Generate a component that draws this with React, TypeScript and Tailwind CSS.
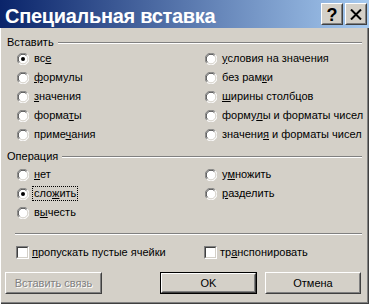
import React from "react";

const font = { fontFamily: '"Liberation Sans", Arial, sans-serif' };

function Radio({ checked }: { checked?: boolean }) {
  return (
    <div className="relative w-[12px] h-[12px] shrink-0">
      <svg width="12" height="12" viewBox="0 0 12 12" className="absolute inset-0">
        <circle cx="6" cy="6" r="5.5" fill="#ffffff" />
        <path d="M1.8 10.2 A5.5 5.5 0 0 1 10.2 1.8" fill="none" stroke="#808080" strokeWidth="1" />
        <path d="M10.2 1.8 A5.5 5.5 0 0 1 1.8 10.2" fill="none" stroke="#ffffff" strokeWidth="1" />
        <path d="M2.6 9.4 A4.5 4.5 0 0 1 9.4 2.6" fill="none" stroke="#404040" strokeWidth="1" />
        <path d="M9.4 2.6 A4.5 4.5 0 0 1 2.6 9.4" fill="none" stroke="#d4d0c8" strokeWidth="1" />
        {checked && <circle cx="6" cy="6" r="2" fill="#000000" />}
      </svg>
    </div>
  );
}

function Check() {
  return (
    <div className="w-[13px] h-[13px] shrink-0 border border-t-[#808080] border-l-[#808080] border-r-white border-b-white">
      <div className="w-full h-full bg-white border border-t-[#404040] border-l-[#404040] border-r-[#d4d0c8] border-b-[#d4d0c8]" />
    </div>
  );
}

function Label({ pre, u, post }: { pre?: string; u: string; post?: string }) {
  return (
    <span className="text-[11px] leading-[13px] text-black whitespace-nowrap">
      {pre}
      <span className="underline underline-offset-[1px]">{u}</span>
      {post}
    </span>
  );
}

function RadioRow({
  checked,
  pre,
  u,
  post,
  focus,
}: {
  checked?: boolean;
  pre?: string;
  u: string;
  post?: string;
  focus?: boolean;
}) {
  return (
    <div className="h-[19px] flex items-center">
      <Radio checked={checked} />
      <div
        className={
          focus
            ? "ml-[3px] h-[15px] px-[1px] flex items-center border border-dotted border-black"
            : "ml-[3px] h-[15px] px-[1px] flex items-center border border-transparent"
        }
      >
        <Label pre={pre} u={u} post={post} />
      </div>
    </div>
  );
}

function GroupTitle({ text }: { text: string }) {
  return (
    <div className="h-[13px] flex items-center pl-[7px] pr-[7px]">
      <span className="text-[11px] leading-[13px] text-black">{text}</span>
      <div className="ml-[4px] flex-1 h-[2px] border-t border-t-[#808080] border-b border-b-white" />
    </div>
  );
}

function Btn({
  children,
  def,
  disabled,
  w,
}: {
  children: React.ReactNode;
  def?: boolean;
  disabled?: boolean;
  w: string;
}) {
  const inner = (
    <div className="h-full w-full border border-t-white border-l-white border-r-[#404040] border-b-[#404040]">
      <div className="h-full w-full border border-t-[#d4d0c8] border-l-[#d4d0c8] border-r-[#808080] border-b-[#808080] flex items-center justify-center">
        <span
          className={
            disabled
              ? "text-[11px] text-[#808080] [text-shadow:1px_1px_0_#ffffff]"
              : "text-[11px] text-black"
          }
        >
          {children}
        </span>
      </div>
    </div>
  );
  return (
    <div className={`${w} h-[22px] ${def ? "border border-black" : ""}`}>{inner}</div>
  );
}

function TitleBtn({ children }: { children: React.ReactNode }) {
  return (
    <div className="w-[22px] h-[22px] bg-[#d4d0c8] border border-t-white border-l-white border-r-[#404040] border-b-[#404040]">
      <div className="w-full h-full border border-t-[#d4d0c8] border-l-[#d4d0c8] border-r-[#808080] border-b-[#808080] flex items-center justify-center">
        {children}
      </div>
    </div>
  );
}

export default function App() {
  return (
    <div
      style={font}
      className="w-[369px] h-[304px] bg-[#d4d0c8] flex flex-col overflow-hidden shadow-[inset_1px_0_0_#ffffff,inset_-1px_-1px_0_#404040,inset_-2px_-2px_0_#808080]"
    >
      {/* Title bar */}
      <div className="h-[28px] shrink-0 flex items-center bg-[linear-gradient(to_right,#0a246a,#a6caf0)] pl-[5px] pr-[2px]">
        <span className="flex-1 text-white font-bold text-[20px] tracking-[-0.3px] leading-[28px] pt-[3px] whitespace-nowrap">
          Специальная вставка
        </span>
        <div className="flex gap-[2px] self-start mt-[3px]">
          <TitleBtn>
            <span className="text-black font-bold text-[18px] leading-[18px] mt-[1px]">?</span>
          </TitleBtn>
          <TitleBtn>
            <svg width="12" height="11" viewBox="0 0 12 11">
              <path d="M1 0.5 L11 10.5 M11 0.5 L1 10.5" stroke="#000" strokeWidth="2" />
            </svg>
          </TitleBtn>
        </div>
      </div>

      {/* Вставить group */}
      <div className="mt-[8px]">
        <GroupTitle text="Вставить" />
      </div>
      <div className="pl-[17px] grid grid-cols-[188px_1fr]">
        <div className="flex flex-col">
          <RadioRow checked pre="вс" u="е" />
          <RadioRow u="ф" post="ормулы" />
          <RadioRow u="з" post="начения" />
          <RadioRow pre="форма" u="т" post="ы" />
          <RadioRow pre="приме" u="ч" post="ания" />
        </div>
        <div className="flex flex-col">
          <RadioRow u="у" post="словия на значения" />
          <RadioRow pre="без рам" u="к" post="и" />
          <RadioRow u="ш" post="ирины столбцов" />
          <RadioRow pre="форму" u="л" post="ы и форматы чисел" />
          <RadioRow pre="значени" u="я" post=" и форматы чисел" />
        </div>
      </div>

      {/* Операция group */}
      <div className="mt-[6px]">
        <GroupTitle text="Операция" />
      </div>
      <div className="mt-[2px] pl-[17px] grid grid-cols-[188px_1fr]">
        <div className="flex flex-col">
          <RadioRow u="н" post="ет" />
          <RadioRow checked focus pre="сло" u="ж" post="ить" />
          <RadioRow pre="в" u="ы" post="честь" />
        </div>
        <div className="flex flex-col">
          <RadioRow pre="у" u="м" post="ножить" />
          <RadioRow u="р" post="азделить" />
        </div>
      </div>

      {/* separator */}
      <div className="mt-[11px] ml-[15px] mr-[7px] h-[2px] border-t border-t-[#808080] border-b border-b-white" />

      {/* checkboxes */}
      <div className="mt-[8px] h-[18px] pl-[16px] grid grid-cols-[188px_1fr] items-center">
        <div className="flex items-center gap-[3px]">
          <Check />
          <Label u="п" post="ропускать пустые ячейки" />
        </div>
        <div className="flex items-center gap-[3px]">
          <Check />
          <Label pre="тр" u="а" post="нспонировать" />
        </div>
      </div>

      {/* buttons */}
      <div className="mt-[11px] pl-[5px] pr-[8px] flex items-center">
        <Btn disabled w="w-[97px]">
          Вставить связь
        </Btn>
        <div className="flex-1" />
        <Btn def w="w-[97px]">
          OK
        </Btn>
        <div className="w-[8px]" />
        <Btn w="w-[96px]">Отмена</Btn>
      </div>
    </div>
  );
}
